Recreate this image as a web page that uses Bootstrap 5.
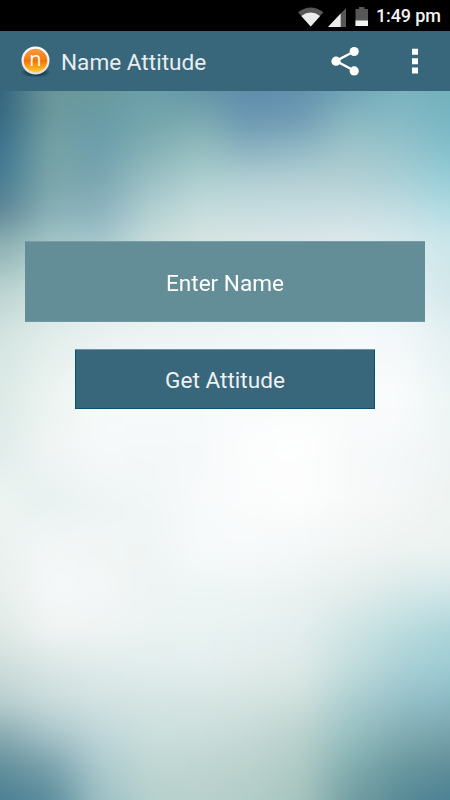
<!DOCTYPE html>
<html lang="en">
<head>
<meta charset="utf-8">
<meta name="viewport" content="width=device-width, initial-scale=1">
<title>Name Attitude</title>
<link rel="stylesheet" href="https://cdn.jsdelivr.net/npm/bootstrap@5.3.0/dist/css/bootstrap.min.css">
<style>
  body { font-family: Roboto, "Liberation Sans", sans-serif; height: 800px; background: #f1f6f6; }
  svg { display: block; flex: none; }
  .backdrop { position: absolute; inset: 0; z-index: -1; overflow: hidden; contain: paint; }
  .blend { position: absolute; inset: 0; filter: blur(9px); }
  .blend div { position: absolute; left: -50px; right: -50px; }
  .status-bar { height: 31px; padding: 1px 10px 0 0; font-size: 18px; font-weight: 500; line-height: 30px; color: #f2f2f2; background: #000; }
  .status-time { width: 64px; letter-spacing: -.15px; }
  .app-bar { height: 60px; background: #38667a; padding: 0 29px 0 18px; }
  .app-title { font-size: 22.600px; line-height: 30px; color: #e7eef1; margin-left: 7px; padding-top: 3px; }
  .action-gap { margin-left: 50px; }
  .screen-body { padding-top: 150px; }
  .btn-flat { border-radius: 0; border: 0; padding: 0; font-size: 22.600px; color: #fff; }
  .name-field { width: 400px; height: 81px; background: #638e97; box-shadow: inset 0 1px #759ea6, inset 0 -1px #6f98a1; padding-top: 3px; }
  .name-field::placeholder { color: #fff; opacity: 1; }
  .get-btn { width: 300px; height: 60px; margin-top: 27px; background: #38667a; box-shadow: inset 0 1px #6d92a0, inset 0 0 0 1px #045370; color: #eef1f4; padding-top: 4px; }
  .get-btn:hover { background: #38667a; color: #eef1f4; }
</style>
</head>
<body class="position-relative overflow-hidden">
<div class="backdrop"><div class="blend" id="blend"></div></div>

<div class="status-bar d-flex justify-content-end align-items-center">
  <svg width="79" height="30" viewBox="297 0 79 30">
    <path d="M298 11.2Q310.700 1.600 323.400 11.200L310.700 25.500Z" fill="#575757"/>
    <path d="M301.300 15Q310.700 8.200 320.100 15L310.700 25.500Z" fill="#ececec"/>
    <path d="M346 7V26H328Z" fill="#575757"/>
    <path d="M340.700 12.600V26H328Z" fill="#ececec"/>
    <path d="M355.500 8H359V6H364.500V8H368V25H355.500Z" fill="#575757"/>
    <path d="M355.500 19.500H368V25H355.500Z" fill="#f2f2f2"/>
  </svg>
  <span class="status-time text-nowrap">1:49 pm</span>
</div>

<nav class="app-bar d-flex align-items-center">
  <svg width="36" height="36" viewBox="0 0 36 36">
    <defs>
      <linearGradient id="orb" x1="0" y1="0" x2="0" y2="1">
        <stop offset="0" stop-color="#fa9a3c"/><stop offset=".45" stop-color="#f57c14"/>
        <stop offset=".5" stop-color="#f66f00"/><stop offset="1" stop-color="#ffd02c"/>
      </linearGradient>
      <linearGradient id="ring" x1="0" y1="0" x2="0" y2="1">
        <stop offset="0" stop-color="#fff"/><stop offset="1" stop-color="#dcdcdc"/>
      </linearGradient>
      <radialGradient id="shade"><stop offset=".5" stop-color="#12303d" stop-opacity=".8"/><stop offset="1" stop-color="#12303d" stop-opacity="0"/></radialGradient>
    </defs>
    <ellipse cx="17.500" cy="29.500" rx="15" ry="5" fill="url(#shade)"/>
    <circle cx="17.500" cy="17.500" r="14" fill="url(#ring)"/>
    <circle cx="17.500" cy="17.500" r="11.700" fill="url(#orb)"/>
    <text x="17.500" y="22.800" text-anchor="middle" font-family="Open Sans, sans-serif" font-size="20" fill="#fff">n</text>
  </svg>
  <span class="app-title me-auto">Name Attitude</span>
  <svg width="28" height="30" viewBox="0 0 28 30" fill="#fff">
    <path d="M23 5.500L5 15L23 24.500" fill="none" stroke="#fff" stroke-width="2.500"/>
    <circle cx="5" cy="15.200" r="4.600"/><circle cx="23.200" cy="5.500" r="4.600"/><circle cx="23.200" cy="24.900" r="4.600"/>
  </svg>
  <svg class="action-gap" width="12" height="30" viewBox="0 0 12 30" fill="#fff">
    <path d="M3 2.700H9V8.700H3ZM3 12.300H9V18.300H3ZM3 21.600H9V27.600H3Z"/>
  </svg>
</nav>

<main class="screen-body d-flex flex-column align-items-center">
  <input class="name-field btn-flat text-center" type="text" placeholder="Enter Name" aria-label="Enter Name">
  <button class="get-btn btn btn-flat" type="button">Get Attitude</button>
</main>

<script>
  // Two-dimensional colour blend: [y, colours at x = 0, 50, 100 ... 450]
  const rows = [
    [91, '33637c 6b979a 68999c 6b9fa9 6495a7 5f8dab 628fac 70a5b7 7bb3bf 72b1bd'],
    [120, '356a82 6e9a9e 699ca8 72a5ab 7caab1 6b97b2 719db5 89b8c0 86bac5 77b6c3'],
    [150, '3c7390 77a3a5 6d9fad 85b1b5 95bebf 8bb3c1 92b9c5 a0c6ca 98c4cd 84c0cc'],
    [180, '467c93 7ba6aa 7aa6b1 9ac0c4 aecfd0 b1cfd3 b5d0d5 b3d0d4 aad0d6 97ced8'],
    [210, '5d8595 88afb6 8bb2bd b0cfd2 c5dcdc c6dcdf c6dce0 c8dde1 c1dde2 b1dbe3'],
    [240, '86abae a0c4c5 a1c5cb c7dcda d5e4e0 d8e5e5 dae6e9 dde8eb d5e8ec cbe6ea'],
    [290, 'b8d2d0 d2e2df dce8e6 e2edeb e5eeed e8f0f0 e9f1f2 ebf2f4 e6f1f4 d2e7ea'],
    [340, 'd4e5e1 e3eeeb ebf2f1 eef4f3 eff5f5 f1f6f6 f3f7f8 f5f9fa f4f8fa e4f0f2'],
    [400, 'dceae6 edf4f2 f7fafa f8fbfb f8fbfc f9fbfc fafcfc fafcfc fafcfc edf5f5'],
    [450, 'e0ece9 f0f5f4 f6f9f9 f4f8f9 f6f9fa fcfdfd fefefe f8fafa f5f8fa eef4f4'],
    [500, 'edf4f2 e8f1f0 eef4f4 f1f6f6 f8fafb fbfcfc fdfdfd f8fafa f4f7f6 eef4f2'],
    [550, 'eaf2ef f3f7f7 f1f6f5 eff5f4 f6fafa f7fafa f4f8f8 f1f5f4 edf3f1 edf3f1'],
    [590, 'e7efec f6f8f9 f4f7f7 eef4f3 eef5f5 eef4f4 ebf2f1 e4eeec d9e9e9 d2e7e9'],
    [630, 'dfe9e5 f0f4f3 eff4f3 ebf3f2 eaf3f2 e8f1f1 e4eeee d0e5e5 bdddde acd5da'],
    [670, 'cbdcd9 d7e5e4 deebea e0ecec e2eded e0ebea dce9e7 c1dcdc a9cfd5 9ccad3'],
    [700, 'bacfd0 cbdcdc d3e2e2 d5e5e3 d6e5e3 d4e4e1 cfe0dc aecfd1 98c1ca 8bbac4'],
    [735, '88aab0 a6c3c9 bfd6d9 cbdfdd cbdedb c6d9d6 bbd2ce 98c0c2 82acb3 77a3ac'],
    [765, '64909b 7ba3ad adcbcf c0d7d4 bfd5d1 bbd2cd b0cbc6 84afb1 6c9aa0 628f99'],
    [800, '4b7f95 5b8c9b 9cbfc4 b6d0cc b9d0cb b2ccc7 a6c4bf 739ea1 588b96 4a8095']
  ];
  const blend = document.getElementById('blend');
  rows.forEach(([y, colours], i) => {
    // The bands run 50px past the visible area so that the blur stays opaque at the edges
    const top = i ? rows[i - 1][0] : y - 50;
    const bottom = i < rows.length - 1 ? rows[i + 1][0] : y + 50;
    const stops = colours.split(' ').map((c, n) => `#${c} ${50 + n * 50}px`);
    const band = document.createElement('div');
    band.style.top = top + 'px';
    band.style.height = (bottom - top) + 'px';
    band.style.background = `linear-gradient(90deg, ${stops.join(', ')})`;
    if (i) {
      const mask = `linear-gradient(transparent, #000 ${y - top}px)`;
      band.style.webkitMaskImage = mask;
      band.style.maskImage = mask;
    }
    blend.append(band);
  });
</script>
<script src="https://cdn.jsdelivr.net/npm/bootstrap@5.3.0/dist/js/bootstrap.bundle.min.js"></script>
</body>
</html>
